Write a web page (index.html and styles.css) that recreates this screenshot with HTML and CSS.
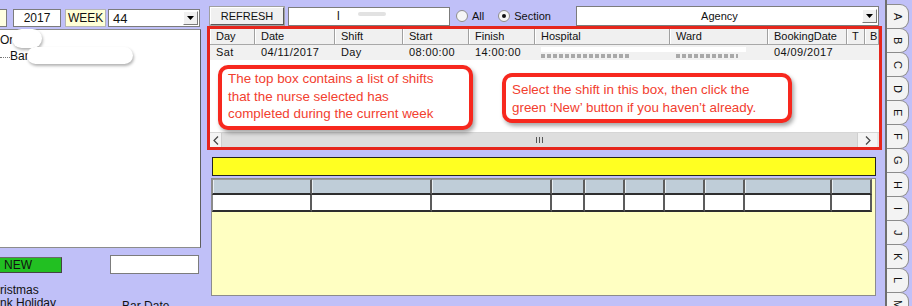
FILE: index.html
```html
<!DOCTYPE html>
<html lang="en">
<head>
    <meta charset="UTF-8">
    <meta name="viewport" content="width=device-width, initial-scale=1.0">
    <title>Shift Bookings</title>
    <link rel="stylesheet" href="styles.css">
</head>
<body>
    <div class="side">
        <div class="week-row">
            <div class="field field-cut"></div>
            <div class="field field-year">2017</div>
            <div class="week-label">WEEK</div>
            <div class="combo combo-week">
                <span class="combo-text">44</span>
                <span class="combo-btn"><svg width="7" height="4" viewBox="0 0 7 4"><polygon points="0,0 7,0 3.5,4" fill="#000"/></svg></span>
            </div>
        </div>
        <div class="tree">
            <div class="tree-item">Or</div>
            <div class="tree-item child"><span class="dots"></span>Bar</div>
            <span class="blot blot-1"></span>
            <span class="blot blot-2"></span>
        </div>
        <div class="side-bottom">
            <button class="btn-new">NEW</button>
            <div class="field field-note"></div>
        </div>
        <div class="legend">
            <div>ristmas</div>
            <div class="legend-row"><span>nk Holiday</span><span class="legend-extra">Bar Date</span></div>
        </div>
    </div>

    <div class="main">
        <div class="toolbar">
            <button class="btn-refresh">REFRESH</button>
            <div class="field field-search"><span>l</span><span class="smear"></span></div>
            <label class="radio"><span class="radio-dot"></span>All</label>
            <label class="radio radio-section"><span class="radio-dot on"></span>Section</label>
            <div class="combo combo-agency">
                <span class="combo-text">Agency</span>
                <span class="combo-btn"><svg width="7" height="4" viewBox="0 0 7 4"><polygon points="0,0 7,0 3.5,4" fill="#000"/></svg></span>
            </div>
        </div>

        <div class="shifts">
            <div class="grid-head">
                <div>Day</div>
                <div>Date</div>
                <div>Shift</div>
                <div>Start</div>
                <div>Finish</div>
                <div>Hospital</div>
                <div>Ward</div>
                <div>BookingDate</div>
                <div class="narrow">T</div>
                <div class="narrow">B</div>
            </div>
            <div class="grid-row">
                <div>Sat</div>
                <div>04/11/2017</div>
                <div>Day</div>
                <div>08:00:00</div>
                <div>14:00:00</div>
                <div><span class="band"></span><span class="smudge smudge-hosp"></span></div>
                <div><span class="smudge smudge-ward"></span></div>
                <div>04/09/2017</div>
                <div></div>
                <div></div>
            </div>
            <div class="grid-body">
                <div class="callout callout-left">The top box contains a list of shifts that the nurse selected has completed during the current week</div>
                <div class="callout callout-right">Select the shift in this box, then click the green ‘New’ button if you haven’t already.</div>
            </div>
            <div class="hscroll">
                <span class="scroll-btn"><svg width="6" height="9" viewBox="0 0 6 9"><polyline points="5,0.5 1,4.5 5,8.5" fill="none" stroke="#444" stroke-width="1.2"/></svg></span>
                <span class="scroll-track"><span class="grip"></span></span>
                <span class="scroll-btn scroll-btn-right"><svg width="6" height="9" viewBox="0 0 6 9"><polyline points="1,0.5 5,4.5 1,8.5" fill="none" stroke="#444" stroke-width="1.2"/></svg></span>
            </div>
        </div>

        <div class="banner"></div>

        <div class="detail">
            <div class="detail-grid">
                <div class="dh"></div><div class="dh"></div><div class="dh"></div><div class="dh"></div><div class="dh"></div>
                <div class="dh"></div><div class="dh"></div><div class="dh"></div><div class="dh"></div><div class="dh"></div>
                <div class="dc"></div><div class="dc"></div><div class="dc"></div><div class="dc"></div><div class="dc"></div>
                <div class="dc"></div><div class="dc"></div><div class="dc"></div><div class="dc"></div><div class="dc"></div>
            </div>
        </div>
    </div>

    <div class="tabs">
        <div class="tab"><span>A</span></div>
        <div class="tab"><span>B</span></div>
        <div class="tab"><span>C</span></div>
        <div class="tab"><span>D</span></div>
        <div class="tab"><span>E</span></div>
        <div class="tab"><span>F</span></div>
        <div class="tab"><span>G</span></div>
        <div class="tab"><span>H</span></div>
        <div class="tab"><span>I</span></div>
        <div class="tab"><span>J</span></div>
        <div class="tab"><span>K</span></div>
        <div class="tab"><span>L</span></div>
        <div class="tab"><span>M</span></div>
    </div>
</body>
</html>
```

FILE: styles.css
```css
* {
    box-sizing: border-box;
}

body {
    margin: 0;
    width: 912px;
    height: 306px;
    overflow: hidden;
    display: flex;
    background: #c0c0f8;
    font-family: "Liberation Sans", Arial, sans-serif;
    font-size: 11px;
    color: #111;
}

/* left column */

.side {
    width: 203px;
    flex: none;
    display: flex;
    flex-direction: column;
}

.side > * {
    flex: none;
}

.week-row {
    display: flex;
    align-items: center;
    margin-top: 9px;
    height: 18px;
}

.field {
    height: 18px;
    background: #fff;
    border: 1px solid #7c7c7c;
}

.field-cut {
    width: 10px;
    margin-left: -3px;
    background: #ffffe2;
}

.field-year {
    width: 48px;
    margin-left: 6px;
    text-align: center;
    line-height: 16px;
    font-size: 12px;
}

.week-label {
    width: 41px;
    height: 18px;
    margin-left: 4px;
    padding-left: 2px;
    background: #ffffd6;
    border: 1px solid #b4b4b4;
    line-height: 16px;
    font-size: 12px;
}

.combo {
    display: flex;
    align-items: center;
    height: 18px;
    background: #fff;
    border: 1px solid #7c7c7c;
}

.combo-text {
    flex: 1;
}

.combo-btn {
    width: 15px;
    height: 14px;
    margin-right: 1px;
    display: flex;
    align-items: center;
    justify-content: center;
    background: #f0f0f0;
    border: 1px solid;
    border-color: #fff #7a7a7a #7a7a7a #fff;
}

.combo-week {
    width: 92px;
    margin-left: 2px;
    padding-left: 4px;
    font-size: 13px;
}

.tree {
    position: relative;
    width: 205px;
    height: 219px;
    margin-top: 2px;
    margin-left: -4px;
    padding-top: 2px;
    background: #fff;
    border: 1px solid #8c8c8c;
    border-right-color: #5e5e5e;
    font-size: 12px;
}

.tree-item {
    height: 16px;
    line-height: 16px;
    padding-left: 3px;
}

.tree-item.child {
    display: flex;
    align-items: center;
}

.dots {
    width: 10px;
    margin-top: 3px;
    border-top: 1px dotted #777;
}

.blot {
    position: absolute;
    background: #fff;
    border-radius: 10px;
    box-shadow: 1px 2px 3px rgba(0, 0, 0, 0.3);
}

.blot-1 {
    left: 15px;
    top: -1px;
    width: 30px;
    height: 19px;
}

.blot-2 {
    left: 30px;
    top: 17px;
    width: 106px;
    height: 17px;
}

.side-bottom {
    display: flex;
    align-items: center;
    height: 19px;
    margin-top: 7px;
}

.btn-new {
    width: 66px;
    height: 16px;
    margin-left: -4px;
    padding: 0 0 0 7px;
    text-align: left;
    font-family: inherit;
    font-size: 12px;
    color: #111;
    background: #22c022;
    border: 1px solid #6a6a6a;
    border-right-color: #444;
    border-bottom-color: #444;
}

.field-note {
    width: 89px;
    height: 19px;
    margin-left: 48px;
}

.legend {
    margin-top: 10px;
    line-height: 13px;
    font-size: 12px;
}

.legend-row {
    display: flex;
}

.legend-extra {
    margin-left: 66px;
    margin-top: 3px;
}

/* main column */

.main {
    width: 675px;
    flex: none;
    margin-left: 4px;
    display: flex;
    flex-direction: column;
}

.main > * {
    flex: none;
}

.toolbar {
    display: flex;
    align-items: center;
    height: 20px;
    margin-top: 6px;
}

.btn-refresh {
    width: 74px;
    height: 18px;
    margin-left: 3px;
    padding: 0;
    font-family: inherit;
    font-size: 11px;
    color: #111;
    background: #f0f0f0;
    border: 1px solid;
    border-color: #fff #5a5a5a #5a5a5a #fff;
    box-shadow: 0 0 0 1px #a0a0a0;
}

.field-search {
    width: 162px;
    height: 19px;
    margin-left: 4px;
    padding-left: 48px;
    display: flex;
    align-items: center;
    font-size: 12px;
}

.smear {
    width: 28px;
    height: 4px;
    margin-left: 18px;
    margin-top: -4px;
    background: #e2e2e2;
    border-radius: 2px;
}

.radio {
    display: flex;
    align-items: center;
    margin-left: 6px;
    font-size: 11px;
}

.radio-section {
    margin-left: 14px;
}

.radio-dot {
    width: 12px;
    height: 12px;
    margin-right: 4px;
    border-radius: 50%;
    border: 1px solid #8e8e8e;
    background: #f6f6f6;
    display: flex;
    align-items: center;
    justify-content: center;
}

.radio-dot.on::after {
    content: "";
    width: 4px;
    height: 4px;
    border-radius: 50%;
    background: #111;
}

.combo-agency {
    width: 303px;
    height: 20px;
    margin-left: 25px;
    text-align: center;
    font-size: 11px;
}

.shifts {
    height: 124px;
    display: flex;
    flex-direction: column;
    background: #fff;
    border: 3px solid #e6261c;
}

.shifts > * {
    flex: none;
}

.grid-head,
.grid-row {
    display: grid;
    grid-template-columns: 45px 80px 68px 66px 66px 135px 98px 79px 18px 1fr;
    font-size: 11px;
}

.grid-head {
    height: 16px;
    background: #f0f0f0;
    border-bottom: 1px solid #a8a8a8;
}

.grid-head div {
    padding-left: 6px;
    line-height: 15px;
    border-right: 1px solid #a0a0a0;
    box-shadow: inset 1px 0 #fff;
}

.grid-head .narrow {
    padding-left: 5px;
}

.grid-row {
    height: 15px;
    background: #f1f1f1;
    letter-spacing: 0.4px;
}

.grid-row div {
    padding-left: 6px;
    line-height: 15px;
    white-space: nowrap;
}

.band {
    display: block;
    width: 205px;
    height: 5px;
    margin-top: 2px;
    background: #fff;
}

.smudge {
    display: block;
    height: 4px;
    margin-top: 2px;
    background: repeating-linear-gradient(90deg, #8a8a8a 0 4px, transparent 4px 6px);
    opacity: 0.7;
}

.smudge-hosp {
    width: 88px;
}

.smudge-ward {
    width: 62px;
    margin-top: 9px;
}

.grid-body {
    position: relative;
    flex: 1 1 auto !important;
}

.callout {
    position: absolute;
    padding: 1px 6px;
    background: #fff;
    border: 4px solid #f7281e;
    border-radius: 10px;
    box-shadow: 2px 3px 4px rgba(0, 0, 0, 0.35);
    font-family: "Liberation Sans", Helvetica, Arial, sans-serif;
    font-size: 13.4px;
    line-height: 17.5px;
    color: #f2402f;
}

.callout-left {
    left: 8px;
    top: 5px;
    width: 255px;
    height: 65px;
    padding-right: 20px;
}

.callout-right {
    left: 292px;
    top: 13px;
    width: 290px;
    height: 50px;
    padding-top: 4px;
    padding-right: 16px;
}

.hscroll {
    height: 15px;
    display: flex;
    background: #e6e6e6;
    border-top: 1px solid #d6d6d6;
}

.scroll-btn {
    width: 12px;
    display: flex;
    align-items: center;
    justify-content: center;
    background: #f4f4f4;
    border-right: 1px solid #cfcfcf;
}

.scroll-btn-right {
    width: 20px;
    margin-right: 2px;
    border-right: none;
    border-left: 1px solid #cfcfcf;
}

.scroll-track {
    flex: 1;
    display: flex;
    align-items: center;
    justify-content: center;
    background: #dedede;
}

.grip {
    width: 7px;
    height: 6px;
    background: repeating-linear-gradient(90deg, #555 0 1px, transparent 1px 3px);
}

.banner {
    width: 664px;
    height: 19px;
    margin-top: 7px;
    margin-left: 5px;
    background: #ffff22;
    border: 1px solid #222;
}

.detail {
    width: 665px;
    height: 118px;
    margin-top: 2px;
    margin-left: 4px;
    background: #ffffc2;
    border: 1px solid #8c8c8c;
}

.detail-grid {
    display: grid;
    grid-template-columns: 100px 120px 120px 33px 40px 40px 40px 40px 87px 40px;
    width: 660px;
}

.dh,
.dc {
    border-right: 2px solid #5c5c5c;
    border-bottom: 2px solid #2e2e2e;
}

.dh {
    height: 16px;
    background: #bfcdd8;
    border-top: 1px solid #9a9a9a;
    box-shadow: inset 1px 0 #e8eef2;
}

.dc {
    height: 17px;
    background: #fff;
}

.dh:first-child,
.dc:nth-child(11) {
    border-left: 1px solid #8a8a8a;
}

/* letter tabs */

.tabs {
    width: 27px;
    flex: none;
    margin-left: 3px;
    padding-top: 5px;
    display: flex;
    flex-direction: column;
    border-left: 2px solid #6e6e6e;
}

.tab {
    flex: none;
    width: 22px;
    height: 25px;
    margin-top: -1px;
    display: flex;
    align-items: center;
    justify-content: center;
    background: #f3f3f3;
    border: 1px solid #8c8c8c;
    border-left: none;
    border-radius: 0 9px 9px 0;
    font-size: 11px;
    color: #111;
}

.tab span {
    writing-mode: vertical-rl;
}
```
